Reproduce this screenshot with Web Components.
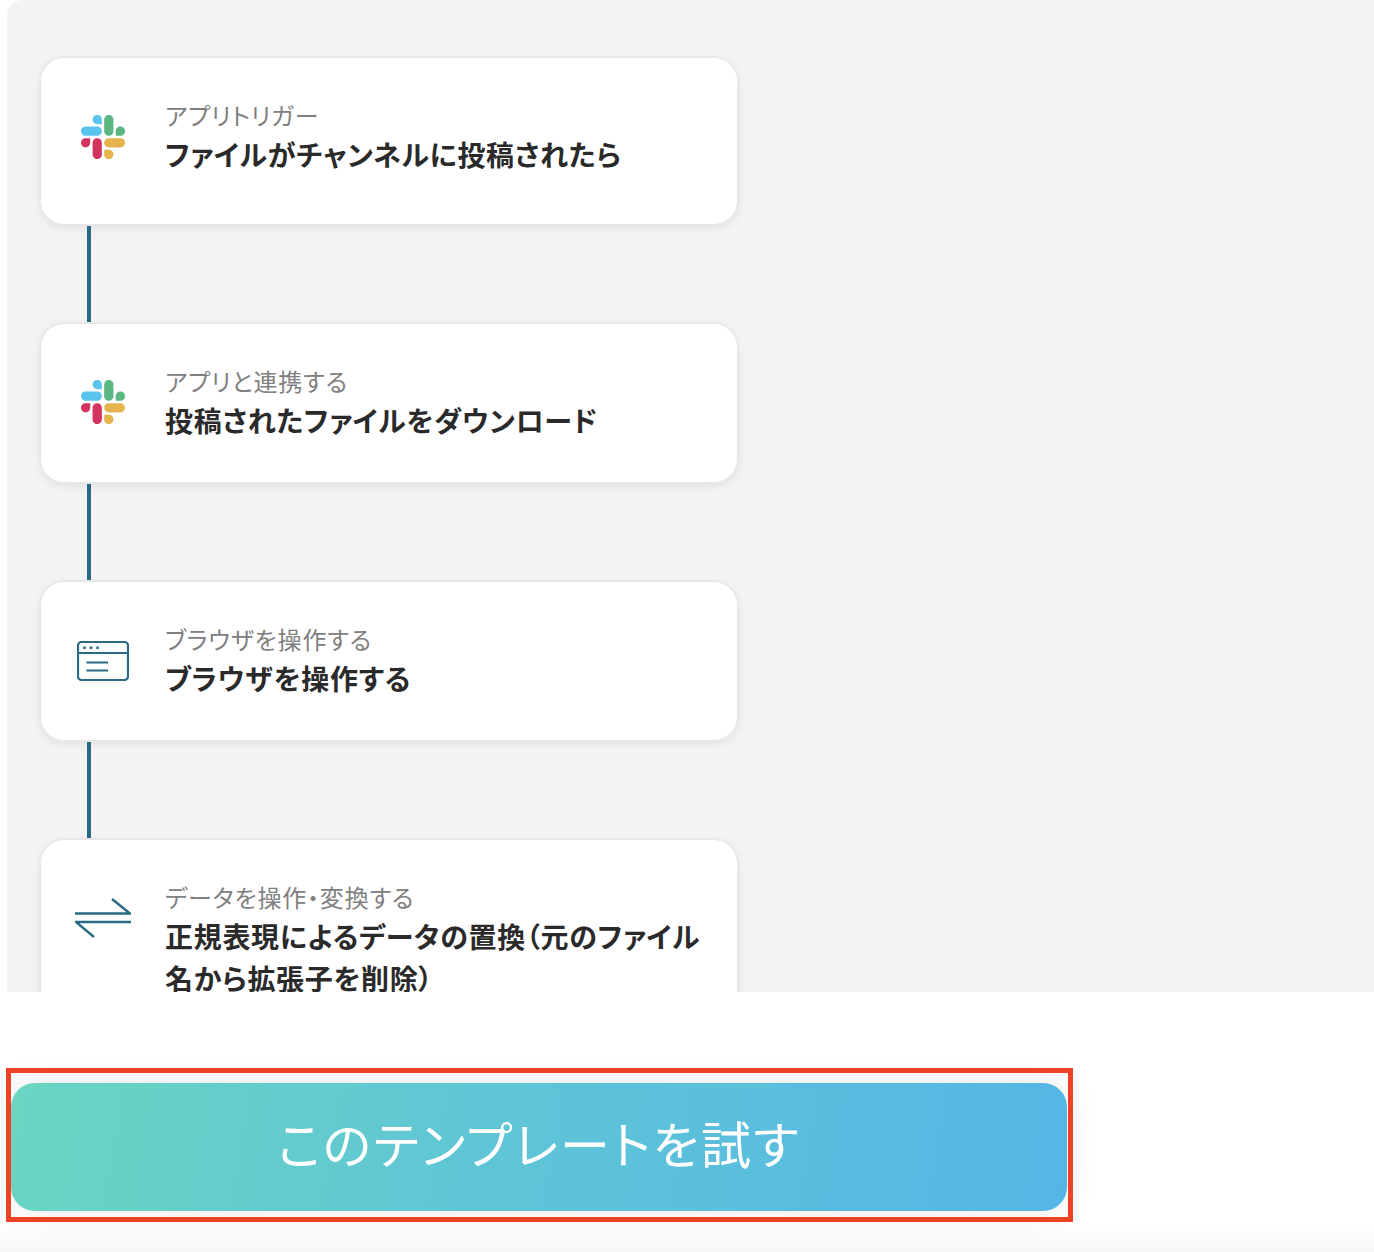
<!DOCTYPE html>
<html lang="ja">
<head>
<meta charset="utf-8">
<title>テンプレート</title>
<style>
  html, body { margin: 0; background: #ffffff; }
  body {
    width: 1374px;
    height: 1252px;
    overflow: hidden;
    font-family: "Noto Sans CJK JP", "Noto Sans", sans-serif;
    font-feature-settings: "palt";
  }
</style>
</head>
<body>
<flow-panel>
  <flow-step label="アプリトリガー" tall>
    <slack-icon slot="icon"></slack-icon>
    ファイルがチャンネルに投稿されたら
  </flow-step>
  <flow-line></flow-line>
  <flow-step label="アプリと連携する">
    <slack-icon slot="icon" style="margin-top: -2px"></slack-icon>
    投稿されたファイルをダウンロード
  </flow-step>
  <flow-line></flow-line>
  <flow-step label="ブラウザを操作する">
    <browser-icon slot="icon"></browser-icon>
    ブラウザを操作する
  </flow-step>
  <flow-line></flow-line>
  <flow-step label="データを操作・変換する">
    <swap-icon slot="icon"></swap-icon>
    正規表現によるデータの置換（元のファイル名から拡張子を削除）
  </flow-step>
</flow-panel>
<try-button>このテンプレートを試す</try-button>
<page-fade></page-fade>

<script>
class FlowPanel extends HTMLElement {
  constructor() {
    super();
    this.attachShadow({ mode: 'open' }).innerHTML = `
      <style>
        :host {
          display: block;
          box-sizing: border-box;
          height: 992px;
          margin-left: 7px;
          padding: 57px 0 0 33px;
          overflow: hidden;
          background: #f3f3f3;
          border-top-left-radius: 16px;
        }
      </style>
      <slot></slot>
    `;
  }
}

class FlowStep extends HTMLElement {
  constructor() {
    super();
    this.attachShadow({ mode: 'open' });
  }

  connectedCallback() {
    this.shadowRoot.innerHTML = `
      <style>
        :host {
          display: flex;
          box-sizing: border-box;
          width: 698px;
          min-height: 160px;
          padding: 44px 30px 30px 34px;
          background: #ffffff;
          border-radius: 24px;
          box-shadow: inset 0 0 0 1px #e6e6e6, 0 0 0 1px #e8e8e8, 0 3px 8px rgba(0, 0, 0, 0.08);
        }
        :host([tall]) { min-height: 168px; }
        .icon { flex: 0 0 91px; height: 72px; display: flex; align-items: center; }
        .text { flex: 1; min-width: 0; }
        .label {
          margin-top: -1px;
          font-size: 24px;
          line-height: 29px;
          letter-spacing: 0.8px;
          color: #808080;
        }
        .title {
          margin-top: 4px;
          font-size: 28px;
          line-height: 42px;
          letter-spacing: 0.7px;
          font-weight: 700;
          color: #2a2a2a;
        }
      </style>
      <div class="icon"><slot name="icon"></slot></div>
      <div class="text">
        <div class="label">${this.getAttribute('label')}</div>
        <div class="title"><slot></slot></div>
      </div>
    `;
  }
}

class FlowLine extends HTMLElement {
  constructor() {
    super();
    this.attachShadow({ mode: 'open' }).innerHTML = `
      <style>
        :host { display: block; height: 98px; padding: 1px 0 1px 47px; box-sizing: border-box; }
        div { width: 4px; height: 96px; background: #2b6a85; }
      </style>
      <div></div>
    `;
  }
}

class SlackIcon extends HTMLElement {
  constructor() {
    super();
    this.attachShadow({ mode: 'open' }).innerHTML = `
      <style>
        :host { display: block; width: 44px; height: 44px; margin-left: 7px; }
        svg { display: block; }
      </style>
      <svg width="44" height="44" viewBox="0 0 122.8 122.8">
        <path fill="#d2335f" d="M25.8 77.6c0 7.1-5.8 12.9-12.9 12.9S0 84.7 0 77.6s5.8-12.9 12.9-12.9h12.9v12.9z"/>
        <path fill="#d2335f" d="M32.3 77.6c0-7.1 5.8-12.9 12.9-12.9s12.9 5.8 12.9 12.9v32.3c0 7.1-5.8 12.9-12.9 12.9s-12.9-5.8-12.9-12.9V77.6z"/>
        <path fill="#5bc4ee" d="M45.2 25.8c-7.1 0-12.9-5.8-12.9-12.9S38.1 0 45.2 0s12.9 5.8 12.9 12.9v12.9H45.2z"/>
        <path fill="#5bc4ee" d="M45.2 32.3c7.1 0 12.9 5.8 12.9 12.9s-5.8 12.9-12.9 12.9H12.9C5.8 58.1 0 52.3 0 45.2s5.8-12.9 12.9-12.9h32.3z"/>
        <path fill="#5bb781" d="M97 45.2c0-7.1 5.8-12.9 12.9-12.9s12.9 5.8 12.9 12.9-5.8 12.9-12.9 12.9H97V45.2z"/>
        <path fill="#5bb781" d="M90.5 45.2c0 7.1-5.8 12.9-12.9 12.9s-12.9-5.8-12.9-12.9V12.9C64.7 5.8 70.5 0 77.6 0s12.9 5.8 12.9 12.9v32.3z"/>
        <path fill="#e6b44c" d="M77.6 97c7.1 0 12.9 5.8 12.9 12.9s-5.8 12.9-12.9 12.9-12.9-5.8-12.9-12.9V97h12.9z"/>
        <path fill="#e6b44c" d="M77.6 90.5c-7.1 0-12.9-5.8-12.9-12.9s5.8-12.9 12.9-12.9h32.3c7.1 0 12.9 5.8 12.9 12.9s-5.8 12.9-12.9 12.9H77.6z"/>
      </svg>
    `;
  }
}

class BrowserIcon extends HTMLElement {
  constructor() {
    super();
    this.attachShadow({ mode: 'open' }).innerHTML = `
      <style>
        :host { display: block; width: 52px; height: 40px; margin-left: 3px; }
        svg { display: block; }
      </style>
      <svg width="52" height="40" viewBox="0 0 52 40" fill="none" stroke="#2b6a85" stroke-width="2.200">
        <rect x="1" y="1" width="50" height="38" rx="3.500"/>
        <path d="M1 12H51"/>
        <path d="M9.500 21.500H31M9.500 29.500H31"/>
        <g fill="#2b6a85" stroke="none">
          <circle cx="7.500" cy="6.800" r="1.500"/>
          <circle cx="14" cy="6.800" r="1.500"/>
          <circle cx="20.500" cy="6.800" r="1.500"/>
        </g>
      </svg>
    `;
  }
}

class SwapIcon extends HTMLElement {
  constructor() {
    super();
    this.attachShadow({ mode: 'open' }).innerHTML = `
      <style>
        :host { display: block; width: 56px; height: 42px; margin-left: 1px; }
        svg { display: block; }
      </style>
      <svg width="56" height="42" viewBox="0 0 56 42" fill="none" stroke="#2b6a85" stroke-width="2.400">
        <path d="M0 15.500H55L37 1"/>
        <path d="M56 24H1L19 39"/>
      </svg>
    `;
  }
}

class TryButton extends HTMLElement {
  constructor() {
    super();
    this.attachShadow({ mode: 'open' }).innerHTML = `
      <style>
        :host {
          display: block;
          position: relative;
          box-sizing: border-box;
          width: 1067px;
          height: 154px;
          margin: 76px 0 0 6px;
          padding: 15px 6px 11px 5px;
        }
        :host::after {
          content: "";
          position: absolute;
          inset: 0;
          border: 5px solid #ee4225;
        }
        button {
          display: block;
          width: 100%;
          height: 128px;
          padding: 0 0 10px;
          border: 0;
          border-radius: 24px;
          color: #ffffff;
          font-family: inherit;
          font-feature-settings: inherit;
          font-size: 50px;
          letter-spacing: 2.200px;
          font-weight: 400;
          background: linear-gradient(100deg, #6bd5c1 0%, #5fc5d6 45%, #55b6e6 100%);
          box-shadow: 0 0 34px rgba(0, 0, 0, 0.09);
        }
      </style>
      <button><slot></slot></button>
    `;
  }
}

class PageFade extends HTMLElement {
  constructor() {
    super();
    this.attachShadow({ mode: 'open' }).innerHTML = `
      <style>
        :host {
          display: block;
          height: 30px;
          background: linear-gradient(180deg, #ffffff 0%, #f7f7f7 100%);
        }
      </style>
    `;
  }
}

customElements.define('flow-panel', FlowPanel);
customElements.define('flow-step', FlowStep);
customElements.define('flow-line', FlowLine);
customElements.define('slack-icon', SlackIcon);
customElements.define('browser-icon', BrowserIcon);
customElements.define('swap-icon', SwapIcon);
customElements.define('try-button', TryButton);
customElements.define('page-fade', PageFade);
</script>
</body>
</html>
